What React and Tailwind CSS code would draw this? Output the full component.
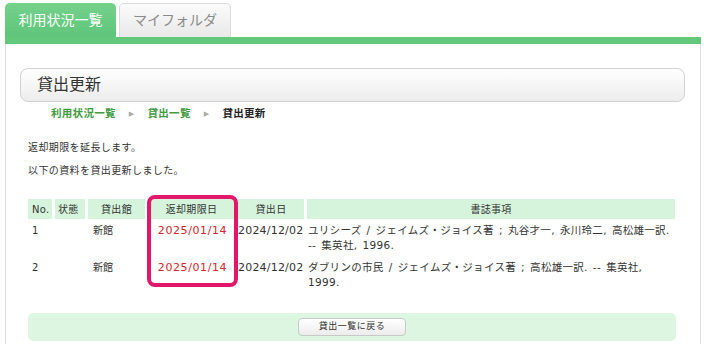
const font = { fontFamily: '"DejaVu Sans", "Noto Sans CJK JP", sans-serif' }

const rows = [
  {
    no: '1',
    lib: '新館',
    due: '2025/01/14',
    lent: '2024/12/02',
    title: ['ユリシーズ / ジェイムズ・ジョイス著 ; 丸谷才一, 永川玲二, 高松雄一訳.', '-- 集英社, 1996.'],
  },
  {
    no: '2',
    lib: '新館',
    due: '2025/01/14',
    lent: '2024/12/02',
    title: ['ダブリンの市民 / ジェイムズ・ジョイス著 ; 高松雄一訳. -- 集英社,', '1999.'],
  },
]

export default function App() {
  return (
    <div className="w-[706px] h-[351px] overflow-hidden bg-white pl-[5px] pr-[5px] text-[#333]" style={font}>
      {/* Tabs */}
      <div className="flex items-end gap-[3px] pt-[3px]">
        <div className="w-[111px] h-[34px] rounded-t-[5px] bg-gradient-to-b from-[#74d18b] to-[#5fc57a] text-white text-[14px] flex items-center justify-center">
          利用状況一覧
        </div>
        <div className="w-[112px] h-[34px] rounded-t-[5px] border border-b-0 border-[#dcdcdc] bg-gradient-to-b from-[#fbfbfb] to-[#e9e9e9] text-[#8a8a8a] text-[14px] flex items-center justify-center">
          マイフォルダ
        </div>
      </div>
      <div className="h-[7px] bg-[#63c77c]" />

      {/* Panel */}
      <div className="h-[300px] border-l border-r border-[#dedede] pl-[14px] pr-[15px] pt-[24px]">
        <div className="h-[34px] rounded-[8px] border border-[#d2d2d2] bg-gradient-to-b from-white to-[#ececec] flex items-center pl-[16px] text-[16px] text-[#333]">
          貸出更新
        </div>

        <div className="mt-[5px] pl-[31px] flex items-center h-[14px] text-[10.5px] tracking-[0.3px] font-bold">
          <span className="text-[#3f9b3f]">利用状況一覧</span>
          <span className="mx-[13px] text-[7px] text-[#aaa]">▶</span>
          <span className="text-[#3f9b3f]">貸出一覧</span>
          <span className="mx-[13px] text-[7px] text-[#aaa]">▶</span>
          <span className="text-[#222]">貸出更新</span>
        </div>

        <div className="pl-[8px] pr-[9px]">
          <p className="mt-[19px] text-[10px] tracking-[0.4px] leading-[16px]">返却期限を延長します。</p>
          <p className="mt-[7px] text-[10px] tracking-[0.4px] leading-[16px]">以下の資料を貸出更新しました。</p>

          <div className="relative mt-[20px]">
            <table className="w-[653px] border-separate border-spacing-x-[3px] border-spacing-y-0 -ml-[3px] text-[10px] table-fixed">
              <colgroup>
                <col className="w-[24px]" />
                <col className="w-[30px]" />
                <col className="w-[57px]" />
                <col className="w-[87px]" />
                <col className="w-[66px]" />
                <col />
              </colgroup>
              <thead>
                <tr className="h-[20px] tracking-[0.3px]">
                  <th className="bg-[#d6f4dc] font-normal text-left pl-[4px]">No.</th>
                  <th className="bg-[#d6f4dc] font-normal text-left pl-[3px]">状態</th>
                  <th className="bg-[#d6f4dc] font-normal text-center">貸出館</th>
                  <th className="bg-[#d6f4dc] font-normal text-center">返却期限日</th>
                  <th className="bg-[#d6f4dc] font-normal text-center">貸出日</th>
                  <th className="bg-[#d6f4dc] font-normal text-center">書誌事項</th>
                </tr>
              </thead>
              <tbody>
                {rows.map((r) => (
                  <tr key={r.no} className="align-top leading-[15px]">
                    <td className="pt-[4px] pb-[3px] pl-[4px]">{r.no}</td>
                    <td className="pt-[4px]"></td>
                    <td className="pt-[4px] pl-[5px]">{r.lib}</td>
                    <td className="pt-[4px] pl-[2px] text-center text-[#d8232a] text-[11px] tracking-[0.6px] whitespace-nowrap">{r.due}</td>
                    <td className="pt-[4px] text-[11px] tracking-[0.2px] whitespace-nowrap">{r.lent}</td>
                    <td className="pt-[4px] pb-[3px] pl-[1px] text-[10.5px] tracking-[0.3px] [word-spacing:1.5px]">
                      <div className="whitespace-nowrap">{r.title[0]}</div>
                      <div className="whitespace-nowrap">{r.title[1]}</div>
                    </td>
                  </tr>
                ))}
              </tbody>
            </table>
            {/* highlight annotation */}
            <div className="absolute left-[119px] top-[-4px] w-[91px] h-[92px] rounded-[8px] border-[4px] border-[#e2176b] pointer-events-none" />
          </div>

          <div className="mt-[20px] h-[28px] rounded-[5px] bg-[#dcf6e1] flex items-center justify-center">
            <button className="w-[108px] h-[18px] rounded-[4px] border border-[#c8c8c8] bg-gradient-to-b from-white to-[#ececec] text-[9px] tracking-[0.5px] text-[#333]">
              貸出一覧に戻る
            </button>
          </div>
        </div>
      </div>
    </div>
  )
}
